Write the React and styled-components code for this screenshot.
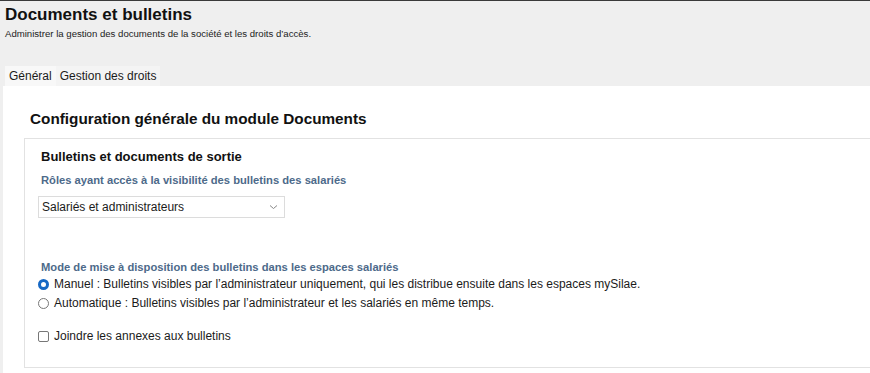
import React from 'react';
import styled, { createGlobalStyle } from 'styled-components';

const GlobalStyle = createGlobalStyle`
  body {
    margin: 0;
    background: #efefef;
    font-family: "Liberation Sans", Arial, sans-serif;
    color: #1b1b1b;
  }
`;

const Page = styled.div`
  border-top: 1px solid #3a3a3a;
  min-height: 372px;
  display: flex;
  flex-direction: column;
`;

const Header = styled.header`
  padding: 4px 5px 0;
`;

const Title = styled.h1`
  margin: 0;
  font-size: 17px;
  line-height: 20px;
  font-weight: 700;
  color: #111;
`;

const Subtitle = styled.p`
  margin: 3px 0 0;
  font-size: 9.6px;
  line-height: 12px;
  color: #222;
`;

const Tabs = styled.div`
  display: flex;
  margin-top: 26px;
  padding-left: 5px;
  height: 20px;
`;

const Tab = styled.div`
  padding: 0 4px;
  font-size: 12px;
  line-height: 20px;
  color: #1b1b1b;
  background: ${p => (p.$active ? '#f8f8f8' : '#f4f4f4')};
`;

const Panel = styled.main`
  flex: 1;
  background: #fff;
  margin-left: 3px;
  padding: 23px 0 6px 21px;
`;

const SectionTitle = styled.h2`
  margin: 0 0 9px 6px;
  font-size: 15.3px;
  line-height: 20px;
  font-weight: 700;
  color: #111;
`;

const Box = styled.section`
  border: 1px solid #e2e2e2;
  border-right: none;
  padding: 9px 0 22px 16px;
`;

const BoxTitle = styled.h3`
  margin: 0;
  font-size: 13px;
  line-height: 18px;
  font-weight: 700;
  color: #111;
`;

const Label = styled.div`
  margin-top: ${p => p.$top || 6}px;
  font-size: 11.2px;
  line-height: 14px;
  font-weight: 700;
  color: #4d6a8a;
`;

const Select = styled.div`
  margin: 9px 0 0 -3px;
  width: 247px;
  height: 22px;
  box-sizing: border-box;
  border: 1px solid #dcdcdc;
  display: flex;
  align-items: center;
  justify-content: space-between;
  padding: 0 6px 0 3px;
  font-size: 12px;
  color: #1b1b1b;
`;

const Chevron = styled.svg`
  width: 9px;
  height: 6px;
`;

const Option = styled.label`
  display: flex;
  align-items: center;
  gap: 5px;
  height: 18px;
  margin-left: -3px;
  margin-top: ${p => p.$top || 0}px;
  font-size: 12px;
  color: #1b1b1b;
`;

const Radio = styled.span`
  width: 11px;
  height: 11px;
  box-sizing: border-box;
  border-radius: 50%;
  border: ${p => (p.$checked ? '3px solid #1668c4' : '1px solid #777')};
  background: #fff;
`;

const Checkbox = styled.span`
  width: 11px;
  height: 11px;
  box-sizing: border-box;
  border-radius: 2px;
  border: 1px solid #777;
  background: #fff;
`;

export default function App() {
  return (
    <>
      <GlobalStyle />
      <Page>
        <Header>
          <Title>Documents et bulletins</Title>
          <Subtitle>Administrer la gestion des documents de la société et les droits d’accès.</Subtitle>
        </Header>
        <Tabs>
          <Tab $active>Général</Tab>
          <Tab>Gestion des droits</Tab>
        </Tabs>
        <Panel>
          <SectionTitle>Configuration générale du module Documents</SectionTitle>
          <Box>
            <BoxTitle>Bulletins et documents de sortie</BoxTitle>
            <Label $top={7}>Rôles ayant accès à la visibilité des bulletins des salariés</Label>
            <Select>
              <span>Salariés et administrateurs</span>
              <Chevron viewBox="0 0 9 6">
                <path d="M1 1.5 L4.5 4.5 L8 1.5" fill="none" stroke="#888" strokeWidth="1" />
              </Chevron>
            </Select>
            <Label $top={42}>Mode de mise à disposition des bulletins dans les espaces salariés</Label>
            <Option $top={1}>
              <Radio $checked />
              Manuel : Bulletins visibles par l’administrateur uniquement, qui les distribue ensuite dans les espaces mySilae.
            </Option>
            <Option $top={1}>
              <Radio />
              Automatique : Bulletins visibles par l’administrateur et les salariés en même temps.
            </Option>
            <Option $top={15}>
              <Checkbox />
              Joindre les annexes aux bulletins
            </Option>
          </Box>
        </Panel>
      </Page>
    </>
  );
}
